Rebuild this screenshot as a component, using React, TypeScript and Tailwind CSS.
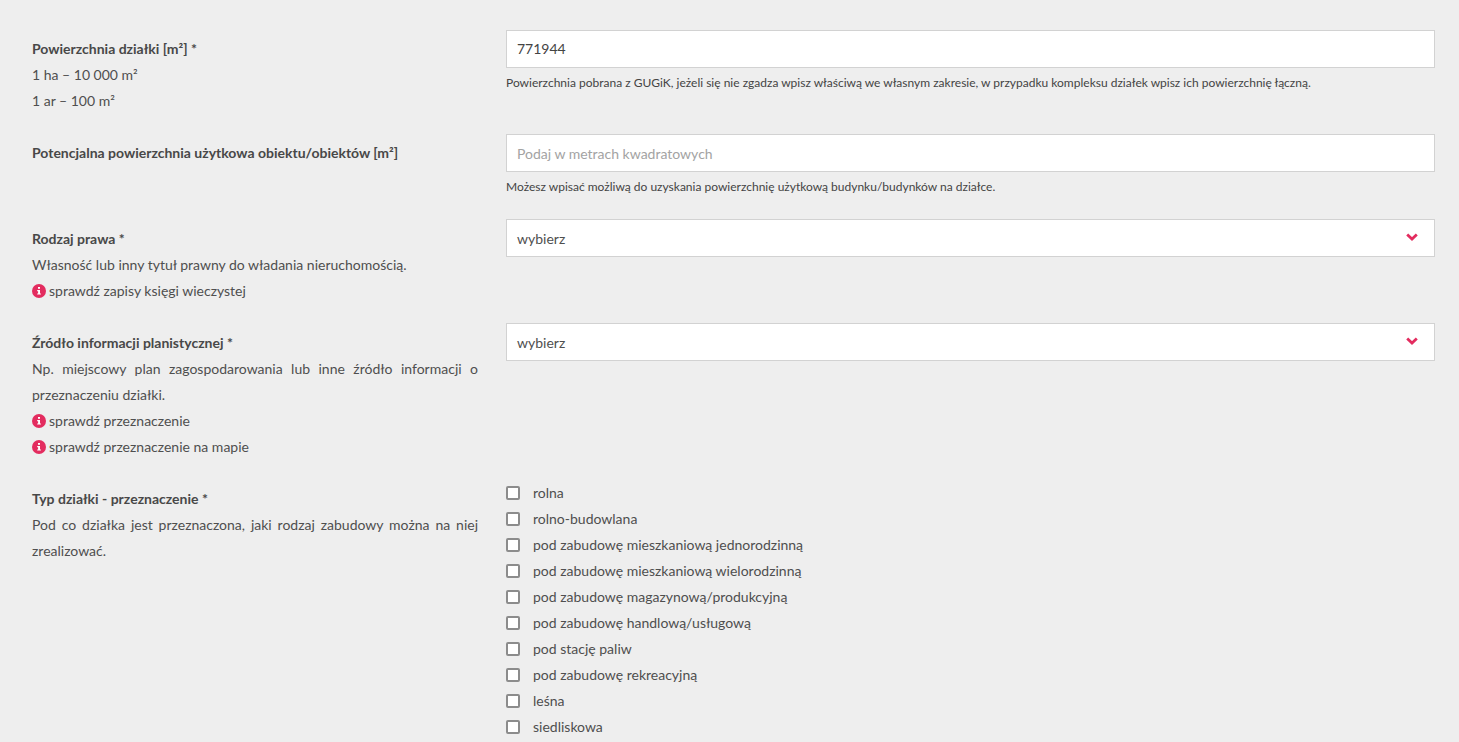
import type { ReactNode } from "react";

const checkboxOptions = [
  "rolna",
  "rolno-budowlana",
  "pod zabudowę mieszkaniową jednorodzinną",
  "pod zabudowę mieszkaniową wielorodzinną",
  "pod zabudowę magazynową/produkcyjną",
  "pod zabudowę handlową/usługową",
  "pod stację paliw",
  "pod zabudowę rekreacyjną",
  "leśna",
  "siedliskowa",
];

function InfoIcon() {
  return (
    <svg viewBox="0 0 14 14" className="mr-[3px] h-[14px] w-[14px] shrink-0">
      <circle cx="7" cy="7" r="7" fill="#e32c5f" />
      <rect x="6" y="3" width="2" height="1.8" fill="#fff" />
      <path d="M5.2 6h2.8v3.4h.9v1.2H5.2V9.4h.9V7.2h-.9z" fill="#fff" />
    </svg>
  );
}

function InfoLink({ children }: { children: ReactNode }) {
  return (
    <div className="flex items-center">
      <InfoIcon />
      <span>{children}</span>
    </div>
  );
}

function Row({ label, right, low }: { label: ReactNode; right: ReactNode; low?: boolean }) {
  return (
    <div className="flex">
      <div className={low ? "w-[446px] shrink-0 pt-[7px] pb-[19px]" : "w-[446px] shrink-0 pt-[6px] pb-[20px]"}>
        {label}
      </div>
      <div className="ml-[28px] w-[929px] shrink-0">{right}</div>
    </div>
  );
}

function Title({ children }: { children: ReactNode }) {
  return <div className="font-bold text-[#484848]">{children}</div>;
}

function Help({ children }: { children: ReactNode }) {
  return <p className="mt-[7px] mb-[24px] text-[12px] leading-[16px] text-[#444]">{children}</p>;
}

function TextInput({ value, placeholder }: { value?: string; placeholder?: string }) {
  return (
    <input
      readOnly
      value={value}
      placeholder={placeholder}
      className={
        value
          ? "block h-[38px] w-full border border-[#d2d2d2] bg-white px-[10px] pb-[1px] text-[14px] text-[#444] outline-none"
          : "block h-[38px] w-full border border-[#d2d2d2] bg-white px-[10px] text-[14px] text-[#444] outline-none placeholder:text-[#a3a3a3]"
      }
    />
  );
}

function SelectBox() {
  return (
    <div className="flex h-[38px] w-full items-center justify-between border border-[#d2d2d2] bg-white pr-[16px] pl-[10px]">
      <span className="pt-[1px]">wybierz</span>
      <svg viewBox="0 0 12 8" className="mb-[2px] h-[8px] w-[12px]" fill="none">
        <path d="M1.2 1.5 6 6l4.8-4.5" stroke="#e32c5f" strokeWidth="2.8" />
      </svg>
    </div>
  );
}

export default function App() {
  return (
    <div
      className="h-[742px] overflow-hidden bg-[#eeeeee] pt-[30px] pl-[32px] text-[14px] leading-[26px] text-[#4f4f4f]"
      style={{ fontFamily: "Lato, 'Liberation Sans', sans-serif" }}
    >
      <Row
        label={
          <>
            <Title>Powierzchnia działki [m²] *</Title>
            <div>1 ha – 10 000 m²</div>
            <div>1 ar – 100 m²</div>
          </>
        }
        right={
          <>
            <TextInput value="771944" />
            <Help>
              Powierzchnia pobrana z GUGiK, jeżeli się nie zgadza wpisz właściwą we własnym zakresie, w przypadku
              kompleksu działek wpisz ich powierzchnię łączną.
            </Help>
          </>
        }
      />
      <Row
        label={<Title>Potencjalna powierzchnia użytkowa obiektu/obiektów [m²]</Title>}
        right={
          <>
            <TextInput placeholder="Podaj w metrach kwadratowych" />
            <Help>Możesz wpisać możliwą do uzyskania powierzchnię użytkową budynku/budynków na działce.</Help>
          </>
        }
      />
      <Row
        low
        label={
          <>
            <Title>Rodzaj prawa *</Title>
            <div>Własność lub inny tytuł prawny do władania nieruchomością.</div>
            <InfoLink>sprawdź zapisy księgi wieczystej</InfoLink>
          </>
        }
        right={<SelectBox />}
      />
      <Row
        low
        label={
          <>
            <Title>Źródło informacji planistycznej *</Title>
            <div className="text-justify">
              Np. miejscowy plan zagospodarowania lub inne źródło informacji o przeznaczeniu działki.
            </div>
            <InfoLink>sprawdź przeznaczenie</InfoLink>
            <InfoLink>sprawdź przeznaczenie na mapie</InfoLink>
          </>
        }
        right={<SelectBox />}
      />
      <Row
        low
        label={
          <>
            <Title>Typ działki - przeznaczenie *</Title>
            <div className="text-justify">
              Pod co działka jest przeznaczona, jaki rodzaj zabudowy można na niej zrealizować.
            </div>
          </>
        }
        right={
          <div className="pt-px">
            {checkboxOptions.map((option) => (
              <label key={option} className="flex h-[26px] items-center">
                <span className="h-[14px] w-[14px] shrink-0 rounded-[2px] border-2 border-[#8c8c8c] bg-white" />
                <span className="ml-[13px]">{option}</span>
              </label>
            ))}
          </div>
        }
      />
    </div>
  );
}
